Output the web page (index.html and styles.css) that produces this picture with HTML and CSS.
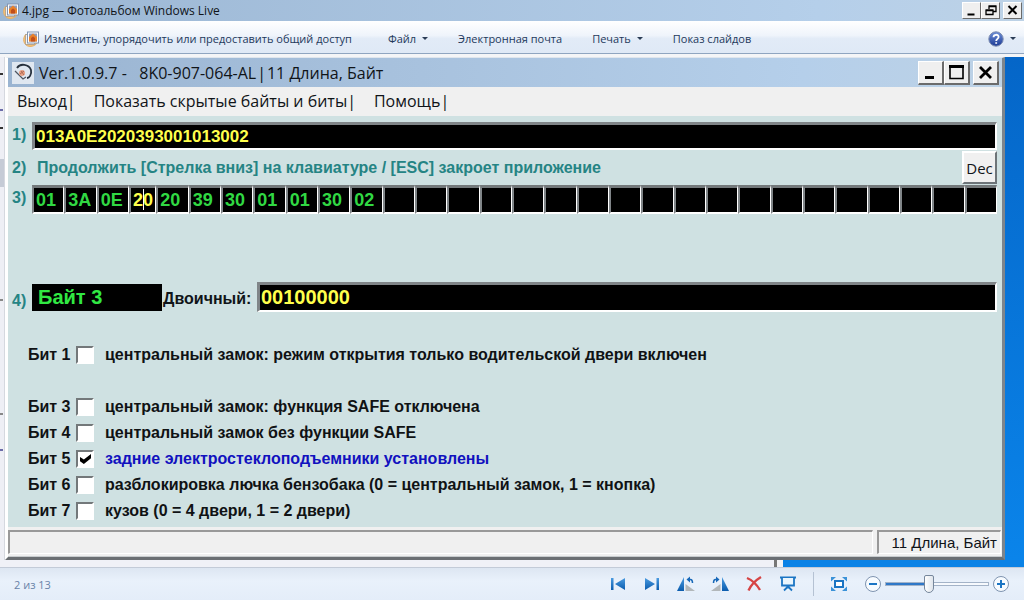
FILE: index.html
```html
<!DOCTYPE html>
<html lang="ru">
<head>
<meta charset="utf-8">
<title>4.jpg — Фотоальбом Windows Live</title>
<link rel="stylesheet" href="styles.css">
</head>
<body>
<svg class="defs" aria-hidden="true">
  <defs>
    <linearGradient id="blue" x1="0" y1="0" x2="0" y2="1"><stop offset="0" stop-color="#4a9be0"/><stop offset="1" stop-color="#0b5cae"/></linearGradient>
    <linearGradient id="help" x1="0" y1="0" x2="0" y2="1"><stop offset="0" stop-color="#6d8fd8"/><stop offset="1" stop-color="#1c3a94"/></linearGradient>
    <symbol id="album" viewBox="0 0 16 16">
      <path d="M3 3C-1 7 0 15 7 15.500C10 15.500 13 14 14 12" fill="#f3c27a" stroke="#e8b066"/>
      <rect x="2.500" y="3.500" width="9" height="10" fill="#f7f3ee" stroke="#b9a78f"/>
      <rect x="4.500" y="1" width="11" height="11" fill="#fff" stroke="#8296b4"/>
      <rect x="6" y="2.500" width="8" height="8" fill="#8f9dbd"/>
      <path d="M6 10.500V6l4-3.500 4 3.500v4.500z" fill="#e9822c"/>
      <path d="M8 10.500V7l2-1.500L12 7v3.500z" fill="#c04f1c"/>
    </symbol>
  </defs>
</svg>

<header class="titlebar">
  <svg class="album-icon" viewBox="0 0 16 16"><use href="#album"/></svg>
  <h1 class="titlebar-text">4.jpg — Фотоальбом Windows Live</h1>
  <div class="win-buttons">
    <button class="win-button" aria-label="Свернуть"><svg viewBox="0 0 16 15"><path d="M4 11.500h7" stroke="#000" stroke-width="2"/></svg></button>
    <button class="win-button" aria-label="Восстановить"><svg viewBox="0 0 16 15"><path d="M6.500 6V3.500h7v5H11M6 3h8M3.500 7.500h7v4h-7zM3 7h8" fill="none" stroke="#000" stroke-width="1.300"/></svg></button>
    <button class="win-button apart" aria-label="Закрыть"><svg viewBox="0 0 16 15"><path d="M4 3l8 8M12 3l-8 8" stroke="#000" stroke-width="2"/></svg></button>
  </div>
</header>

<nav class="toolbar">
  <button class="tool tool-main"><svg class="album-icon" viewBox="0 0 16 16"><use href="#album"/></svg>Изменить, упорядочить или предоставить общий доступ</button>
  <button class="tool">Файл<span class="caret"></span></button>
  <button class="tool">Электронная почта</button>
  <button class="tool">Печать<span class="caret"></span></button>
  <button class="tool">Показ слайдов</button>
  <button class="tool tool-help" aria-label="Справка">
    <svg class="help-icon" viewBox="0 0 16 16"><circle cx="8" cy="8" r="7.200" fill="url(#help)" stroke="#7b8bb0"/><path d="M5.500 6.200C5.500 3 10.600 3 10.600 6C10.600 7.900 8.200 7.800 8.200 10M8.200 11.200v1.600" fill="none" stroke="#fff" stroke-width="1.800"/></svg>
    <span class="caret"></span>
  </button>
</nav>

<main class="photo">
  <div class="backdrop-left"><i class="speck"></i><i class="speck violet"></i><i class="speck"></i><i class="shade"></i><i class="speck gray"></i><i class="speck gray"></i><i class="speck violet"></i></div>
  <section class="window">
    <div class="app-title">
      <svg class="app-icon" viewBox="0 0 22 22"><rect width="22" height="22" fill="#dfe7f0"/><path d="M5 6C8 1 17 2 19 8C20 13 17 16 15 16" fill="none" stroke="#26303c" stroke-width="1.800"/><path d="M3 9l8 8 3-2" fill="none" stroke="#4d5560" stroke-width="1.200"/><circle cx="10" cy="11" r="3" fill="#e7a083"/><path d="M8 12l4-3M9 9l3 4" stroke="#b06b55"/></svg>
      <h2 class="app-title-text">Ver.1.0.9.7 -&nbsp;&nbsp; 8K0-907-064-AL<span class="bar spaced">|</span>11 Длина, Байт</h2>
      <div class="win-buttons">
        <button class="win-button big" aria-label="Свернуть"><svg viewBox="0 0 23 21"><path d="M6 15.500h9" stroke="#000" stroke-width="3"/></svg></button>
        <button class="win-button big" aria-label="Развернуть"><svg viewBox="0 0 23 21"><path d="M5 4v12.500h13V4" fill="none" stroke="#000" stroke-width="1.600"/><path d="M4 4.500h15" stroke="#000" stroke-width="3"/></svg></button>
        <button class="win-button big apart" aria-label="Закрыть"><svg viewBox="0 0 23 21"><path d="M6 5l11 11M17 5L6 16" stroke="#000" stroke-width="2.800"/></svg></button>
      </div>
    </div>
    <div class="app-menu">
      <button class="menu-item">Выход<span class="bar">|</span></button>
      <button class="menu-item">Показать скрытые байты и биты<span class="bar">|</span></button>
      <button class="menu-item">Помощь<span class="bar">|</span></button>
    </div>
    <form class="app-body">
      <div class="line line-code">
        <label class="num" for="code">1)</label>
        <input class="field code" id="code" value="013A0E2020393001013002">
      </div>
      <div class="line line-hint">
        <span class="num">2)</span>
        <p class="hint">Продолжить [Стрелка вниз] на клавиатуре / [ESC] закроет приложение</p>
        <button class="dec" type="button">Dec</button>
      </div>
      <div class="line line-bytes">
        <span class="num">3)</span>
        <div class="bytes" id="bytes">
          <input class="byte" aria-label="Байт 0" value="01"><input class="byte" aria-label="Байт 1" value="3A"><input class="byte" aria-label="Байт 2" value="0E"><span class="active-byte"><input class="byte current" aria-label="Байт 3" value="20"></span><input class="byte" aria-label="Байт 4" value="20"><input class="byte" aria-label="Байт 5" value="39"><input class="byte" aria-label="Байт 6" value="30"><input class="byte" aria-label="Байт 7" value="01"><input class="byte" aria-label="Байт 8" value="01"><input class="byte" aria-label="Байт 9" value="30"><input class="byte" aria-label="Байт 10" value="02"><input class="byte" aria-label="Байт 11"><input class="byte" aria-label="Байт 12"><input class="byte" aria-label="Байт 13"><input class="byte" aria-label="Байт 14"><input class="byte" aria-label="Байт 15"><input class="byte" aria-label="Байт 16"><input class="byte" aria-label="Байт 17"><input class="byte" aria-label="Байт 18"><input class="byte" aria-label="Байт 19"><input class="byte" aria-label="Байт 20"><input class="byte" aria-label="Байт 21"><input class="byte" aria-label="Байт 22"><input class="byte" aria-label="Байт 23"><input class="byte" aria-label="Байт 24"><input class="byte" aria-label="Байт 25"><input class="byte" aria-label="Байт 26"><input class="byte" aria-label="Байт 27"><input class="byte" aria-label="Байт 28"><input class="byte" aria-label="Байт 29">
        </div>
      </div>
      <div class="line line-binary">
        <span class="num">4)</span>
        <output class="byte-name">Байт 3</output>
        <label class="binary-label" for="binary">Двоичный:</label>
        <input class="field binary" id="binary" value="00100000">
      </div>
      <div class="bits">
        <label class="bit"><span class="bit-name">Бит 1</span><input type="checkbox" class="check"><span>центральный замок: режим открытия только водительской двери включен</span></label>
        <label class="bit after-gap"><span class="bit-name">Бит 3</span><input type="checkbox" class="check"><span>центральный замок: функция SAFE отключена</span></label>
        <label class="bit"><span class="bit-name">Бит 4</span><input type="checkbox" class="check"><span>центральный замок без функции SAFE</span></label>
        <label class="bit"><span class="bit-name">Бит 5</span><input type="checkbox" class="check" checked><span class="on">задние электростеклоподъемники установлены</span></label>
        <label class="bit"><span class="bit-name">Бит 6</span><input type="checkbox" class="check"><span>разблокировка лючка бензобака (0 = центральный замок, 1 = кнопка)</span></label>
        <label class="bit"><span class="bit-name">Бит 7</span><input type="checkbox" class="check"><span>кузов (0 = 4 двери, 1 = 2 двери)</span></label>
      </div>
    </form>
    <div class="status">
      <div class="status-main"></div>
      <div class="status-length">11 Длина, Байт</div>
    </div>
  </section>
  <div class="desktop"></div>
  <div class="backdrop-bottom"></div>
</main>

<footer class="footer">
  <span class="counter">2 из 13</span>
  <div class="controls">
    <button class="ctl" aria-label="Предыдущее"><svg viewBox="0 0 18 18"><path d="M2 3h2.500v12H2zM16 3v12L6 9z" fill="url(#blue)"/></svg></button>
    <button class="ctl" aria-label="Следующее"><svg viewBox="0 0 18 18"><path d="M16 3h-2.500v12H16zM2 3v12l10-6z" fill="url(#blue)"/></svg></button>
    <button class="ctl" aria-label="Повернуть влево"><svg viewBox="0 0 18 18"><path d="M7 2v14H0z" fill="url(#blue)"/><path d="M8.500 9v7H18z" fill="#b2b7ba"/><path d="M11 4.500h2.500q2 0 2 3.500" fill="none" stroke="#1768b8" stroke-width="1.500"/><path d="M9.500 4.500l3.500-3v6z" fill="#1768b8"/></svg></button>
    <button class="ctl" aria-label="Повернуть вправо"><svg viewBox="0 0 18 18"><path d="M11 2v14h7z" fill="url(#blue)"/><path d="M9.500 9v7H0z" fill="#b2b7ba"/><path d="M6 4.500H4.500q-2 0-2 3.500" fill="none" stroke="#1768b8" stroke-width="1.500"/><path d="M8.500 4.500L5 1.500v6z" fill="#1768b8"/></svg></button>
    <button class="ctl" aria-label="Удалить"><svg viewBox="0 0 18 18"><path d="M2 3C7 5 12 10 15 15M16 2C11 5 6 10 3.500 15.500" fill="none" stroke="#d64545" stroke-width="2.400"/></svg></button>
    <button class="ctl" aria-label="Слайд-шоу"><svg viewBox="0 0 18 18"><path d="M1 2.500h16" stroke="#1b75c4" stroke-width="2"/><path d="M3 3v7.500h12V3M9 11v2M5 15.500l3-3h2l3 3" fill="#e9f5fd" stroke="#1b75c4" stroke-width="1.800"/></svg></button>
    <i class="divider"></i>
    <button class="ctl" aria-label="По размеру окна"><svg viewBox="0 0 18 18"><rect x="5" y="6" width="8" height="6" fill="#fff" stroke="#1b75c4" stroke-width="2"/><path d="M1 2h5L1 6.500zM17 2h-5l5 4.500zM1 16h5l-5-4.500zM17 16h-5l5-4.500z" fill="#3b92d8"/></svg></button>
    <button class="ctl" aria-label="Уменьшить"><svg viewBox="0 0 18 18"><circle cx="9" cy="9" r="7.500" fill="#f7fbff" stroke="#7f94b0"/><path d="M5 9h8" stroke="#1b75c4" stroke-width="2"/></svg></button>
    <input class="zoom" type="range" min="0" max="100" value="41" aria-label="Масштаб">
    <button class="ctl" aria-label="Увеличить"><svg viewBox="0 0 18 18"><circle cx="9" cy="9" r="7.500" fill="#f7fbff" stroke="#7f94b0"/><path d="M5 9h8M9 5v8" stroke="#1b75c4" stroke-width="2"/></svg></button>
  </div>
</footer>
</body>
</html>
```
FILE: styles.css
```css
* { box-sizing: border-box; }
body {
  margin: 0;
  min-height: 100vh;
  display: flex;
  flex-direction: column;
  background: #f4f5f7;
  font-family: "Open Sans", "Noto Sans", sans-serif;
  font-size: 12px;
  color: #101418;
}
button, input { font: inherit; color: inherit; }
button { border: 0; padding: 0; background: none; }
svg { display: block; }
.defs { position: absolute; width: 0; height: 0; }

.titlebar {
  display: flex;
  align-items: center;
  height: 21px;
  padding: 0 2px 0 3px;
  background: linear-gradient(90deg, #9bb6d3, #b5cfea 80%, #bdd2e6);
}
.album-icon { width: 16px; height: 16px; flex: none; }
.titlebar-text { flex: 1; margin: 0 0 0 3px; font-size: 12px; font-weight: 400; line-height: 20px; }
.win-buttons { display: flex; }
.win-button {
  width: 19px;
  height: 17px;
  background: #efefef;
  border: 1px solid;
  border-color: #fff #6b6b6b #6b6b6b #fff;
}
.win-button svg { width: 100%; height: 100%; }
.win-button.apart { margin-left: 3px; }
.win-button.big { width: 26px; height: 24px; border-right-width: 2px; border-bottom-width: 2px; }

.toolbar {
  display: flex;
  align-items: center;
  gap: 30px;
  height: 33px;
  padding: 3px 8px 0 23px;
  background: linear-gradient(#fff, #eff4fb 45%, #e2ebf7 55%, #dfe9f6);
  border-bottom: 1px solid #8fa5c0;
  color: #1e395b;
  font-size: 11px;
}
.tool { display: flex; align-items: center; }
.tool-main { padding-right: 6px; }
.tool-main .album-icon { margin-right: 5px; }
.tool-help { margin-left: auto; }
.help-icon { width: 16px; height: 16px; }
.caret { margin-left: 6px; border: 3px solid transparent; border-top-color: #2b3c55; border-bottom: 0; }

.photo {
  flex: 1;
  display: grid;
  grid-template-columns: 5px 1fr 19px;
  grid-template-rows: 1fr 7px;
  padding-top: 3px;
}
.backdrop-left { display: flex; flex-direction: column; background: #eeeff5; border-right: 1px solid #d5d8df; }
.speck { width: 3px; height: 2px; margin-top: 16px; background: #333; }
.speck.violet { margin-top: 34px; background: #6c6ca8; }
.shade { width: 4px; height: 28px; margin-top: 30px; background: #c5cbd6; }
.speck.gray { margin-top: 112px; background: #888; }
.window {
  display: flex;
  flex-direction: column;
  background: #f0f0f0;
  border: solid;
  border-width: 1px 3px 3px;
  border-color: #dfe6ee #7d858c #6b6f73 #fff;
}
.desktop { background: linear-gradient(#0566c8, #0a84ea); }
.backdrop-bottom {
  grid-column: 1 / -1;
  background: linear-gradient(90deg, #f0f1f7 0 774px, #777 774px 777px, #f3f3f5 777px 783px, #0a82e6 783px);
}

.app-title {
  display: flex;
  align-items: center;
  height: 29px;
  padding: 0 3px 0 4px;
  background: linear-gradient(90deg, #9ab4d1, #b5cfea 80%, #bdd2e6);
}
.app-icon { width: 22px; height: 22px; }
.app-title-text { flex: 1; margin: 0 0 0 5px; font-size: 16px; font-weight: 400; }
.bar.spaced { margin: 0 1px; }
.app-menu {
  display: flex;
  align-items: center;
  gap: 18px;
  height: 29px;
  padding: 0 0 2px 9px;
  font-size: 16px;
}

.app-body {
  flex: 1;
  padding: 6px 5px 0 4px;
  background: #cfe1e2;
  font-family: "Liberation Sans", Arial, sans-serif;
  font-size: 16px;
  font-weight: 700;
}
.line { display: flex; }
.num { width: 20px; flex: none; color: #258484; line-height: 26px; }
.field {
  flex: 1;
  min-width: 0;
  padding: 0 1px;
  background: #000;
  color: #ffff4c;
  border: solid;
  border-width: 3px 2px 2px 3px;
  border-color: #808588 #fff #fff #808588;
  border-radius: 0;
  outline: 0;
}
.line-code { height: 28px; }
.code { font-size: 17px; }
.line-hint { height: 35px; align-items: center; }
.hint { flex: 1; margin: 0 0 0 5px; color: #258484; }
.dec {
  width: 35px;
  height: 33px;
  background: #f0f0f0;
  border: 2px solid;
  border-color: #fff #6d7478 #6d7478 #fff;
  font-family: "Open Sans", "Noto Sans", sans-serif;
  font-size: 15px;
  font-weight: 400;
}
.line-bytes { height: 29px; margin-bottom: 68px; }
.bytes { flex: 1; display: flex; }
.byte {
  flex: 1 1 0;
  width: 0;
  min-width: 0;
  height: 29px;
  padding: 0 0 0 2px;
  background: #000;
  color: #31d843;
  border: solid;
  border-width: 3px 1px 2px 2px;
  border-color: #74797b #fff #fff #808588;
  border-radius: 0;
  outline: 0;
  font-size: 18px;
}
.byte.current { color: #ffff4c; }
.active-byte { position: relative; flex: 1 1 0; display: flex; }
.active-byte::after { content: ""; position: absolute; left: 14px; top: 4px; width: 1px; height: 21px; background: #fff; }
.line-binary { height: 30px; }
.line-binary .num { line-height: 38px; }
.byte-name { width: 130px; height: 27px; margin-top: 2px; padding-left: 6px; background: #000; color: #31e843; font-size: 20px; line-height: 26px; }
.binary-label { width: 95px; padding-left: 1px; line-height: 34px; }
.binary { font-size: 20px; }

.bits { padding-top: 30px; }
.bit { display: flex; align-items: center; height: 26px; padding-left: 16px; color: #101214; }
.bit.after-gap { margin-top: 26px; }
.bit-name { width: 48px; }
.check {
  appearance: none;
  width: 18px;
  height: 18px;
  margin: 0 11px 0 0;
  background: #fff;
  border: 2px solid;
  border-color: #73787a #fff #fff #73787a;
}
.check:checked::after {
  content: "";
  display: block;
  width: 11px;
  height: 10px;
  margin: 2px 0 0 2px;
  background: #000;
  clip-path: polygon(0 30%, 35% 55%, 100% 0, 100% 42%, 35% 100%, 0 72%);
}
.on { color: #1111bf; }

.status {
  display: flex;
  gap: 4px;
  height: 30px;
  padding: 3px 1px 2px 0;
  border-bottom: 1px solid #c8ccce;
  font-family: "Liberation Sans", Arial, sans-serif;
  font-size: 15px;
}
.status-main, .status-length { border: solid; border-width: 2px 1px 1px 2px; border-color: #999 #fff #fff #999; }
.status-main { flex: 1; }
.status-length { width: 124px; padding-right: 3px; text-align: right; line-height: 22px; }

.footer {
  display: flex;
  align-items: center;
  justify-content: space-between;
  height: 33px;
  padding: 0 14px;
  background: linear-gradient(#dde6f2, #e9f1fb 40%, #e4edf9);
  border-top: 1px solid #c3cbd8;
  color: #6983a8;
  font-size: 11px;
}
.controls { display: flex; align-items: center; gap: 16px; }
.ctl { width: 18px; height: 18px; }
.ctl svg { width: 18px; height: 18px; }
.divider { width: 1px; height: 24px; background: #b5c2d3; }
.zoom { appearance: none; width: 104px; height: 20px; margin: 0 -13px; background: none; }
.zoom::-webkit-slider-runnable-track {
  height: 4px;
  background: linear-gradient(90deg, #2f78c8 42%, #f6f9fd 42%);
  border: 1px solid #a3b3c8;
}
.zoom::-webkit-slider-thumb {
  appearance: none;
  width: 10px;
  height: 18px;
  margin-top: -8px;
  background: linear-gradient(90deg, #fff, #dfe5ec);
  border: 1px solid #76879c;
  border-radius: 2px 2px 5px 5px;
}
```
